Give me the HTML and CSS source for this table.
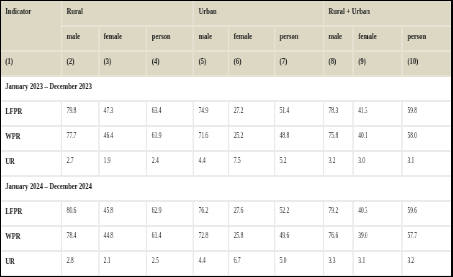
FILE: index.html
```html
<!DOCTYPE html>
<html lang="en">
  <head>
    <meta charset="UTF-8" />
    <meta name="viewport" content="width=device-width, initial-scale=1.0" />
    <title>Labour force indicators</title>
    <link rel="stylesheet" href="styles.css">
  </head>
  <body>
    <div class="frame">
      <table class="stats">
        <colgroup>
          <col><col><col><col><col><col><col><col><col><col>
        </colgroup>
        <thead>
          <tr>
            <th class="ind-top">Indicator</th>
            <th colspan="3">Rural</th>
            <th colspan="3">Urban</th>
            <th colspan="3">Rural + Urban</th>
          </tr>
          <tr>
            <th class="ind-bottom"></th>
            <th>male</th><th>female</th><th>person</th>
            <th>male</th><th>female</th><th>person</th>
            <th>male</th><th>female</th><th>person</th>
          </tr>
          <tr>
            <th>(1)</th><th>(2)</th><th>(3)</th><th>(4)</th><th>(5)</th>
            <th>(6)</th><th>(7)</th><th>(8)</th><th>(9)</th><th>(10)</th>
          </tr>
        </thead>
        <tbody>
          <tr class="period"><td colspan="10">January 2023 – December 2023</td></tr>
          <tr>
            <th>LFPR</th><td>79.8</td><td>47.3</td><td>63.4</td><td>74.9</td>
            <td>27.2</td><td>51.4</td><td>78.3</td><td>41.3</td><td>59.8</td>
          </tr>
          <tr>
            <th>WPR</th><td>77.7</td><td>46.4</td><td>61.9</td><td>71.6</td>
            <td>25.2</td><td>48.8</td><td>75.8</td><td>40.1</td><td>58.0</td>
          </tr>
          <tr>
            <th>UR</th><td>2.7</td><td>1.9</td><td>2.4</td><td>4.4</td>
            <td>7.5</td><td>5.2</td><td>3.2</td><td>3.0</td><td>3.1</td>
          </tr>
          <tr class="period"><td colspan="10">January 2024 – December 2024</td></tr>
          <tr>
            <th>LFPR</th><td>80.6</td><td>45.8</td><td>62.9</td><td>76.2</td>
            <td>27.6</td><td>52.2</td><td>79.2</td><td>40.3</td><td>59.6</td>
          </tr>
          <tr>
            <th>WPR</th><td>78.4</td><td>44.8</td><td>61.4</td><td>72.8</td>
            <td>25.8</td><td>49.6</td><td>76.6</td><td>39.0</td><td>57.7</td>
          </tr>
          <tr>
            <th>UR</th><td>2.8</td><td>2.1</td><td>2.5</td><td>4.4</td>
            <td>6.7</td><td>5.0</td><td>3.3</td><td>3.1</td><td>3.2</td>
          </tr>
        </tbody>
      </table>
    </div>
  </body>
</html>
```

FILE: styles.css
```css
* {
  margin: 0;
  padding: 0;
  box-sizing: border-box;
}
body {
  background: #fff;
  font-family: "Liberation Serif", "Times New Roman", serif;
  color: #222;
}

/* screenshot frame */
.frame {
  width: 453px;
  height: 277px;
  border-style: solid;
  border-color: #000;
  border-width: 1px 2px 1px 1px;
  overflow: hidden;
}

/* the source table is set in a narrow face, so squeeze it sideways */
.stats {
  width: 626px;
  table-layout: fixed;
  border-collapse: collapse;
  background: #fff;
  transform: scaleX(0.72);
  transform-origin: left top;
  will-change: transform;
}
.stats col:nth-child(1) { width: 13.5%; }
.stats col:nth-child(2) { width: 8.2%; }
.stats col:nth-child(3) { width: 10.7%; }
.stats col:nth-child(4) { width: 10.4%; }
.stats col:nth-child(5) { width: 7.8%; }
.stats col:nth-child(6) { width: 10.2%; }
.stats col:nth-child(7) { width: 10.9%; }
.stats col:nth-child(8) { width: 6.6%; }
.stats col:nth-child(9) { width: 10.9%; }
.stats col:nth-child(10) { width: 10.8%; }

.stats tr {
  height: 25px;
}
.stats th,
.stats td {
  padding: 0 6px 5px;
  text-align: left;
  vertical-align: middle;
  font-size: 9px;
  line-height: 10px;
  white-space: nowrap;
  border: 2px solid #ebebeb;
}
.stats td {
  font-size: 7.6px;
  color: #262626;
}

.stats thead th {
  background: #dcd8c4;
  border-color: #e6e3d5;
  border-top: none;
}
.stats thead tr > :first-child {
  border-left: none;
}
.stats thead .ind-top {
  border-bottom: none;
}

.stats tbody tr > :first-child {
  border-left: none;
}
.stats tbody tr > :last-child {
  border-right: none;
}

.period td {
  font-weight: bold;
  font-size: 9px;
  color: #1e1e1e;
}
```
